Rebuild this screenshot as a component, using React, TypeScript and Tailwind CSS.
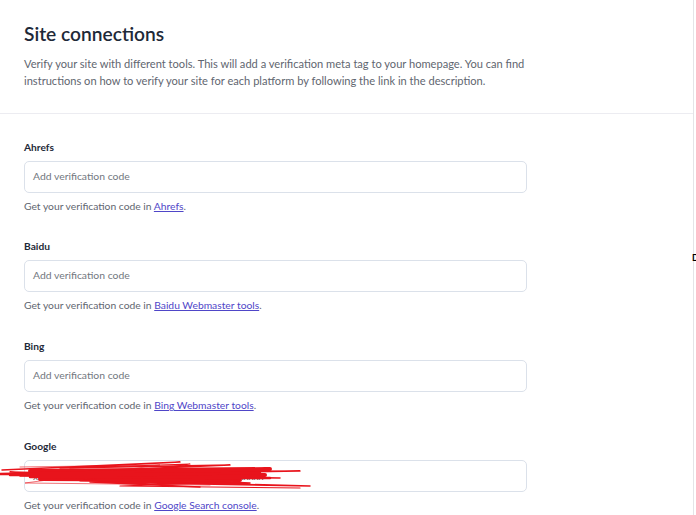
import React from "react";

const sections = [
  { name: "Ahrefs", link: "Ahrefs", value: "" },
  { name: "Baidu", link: "Baidu Webmaster tools", value: "" },
  { name: "Bing", link: "Bing Webmaster tools", value: "" },
  { name: "Google", link: "Google Search console", value: "xxxxxxxxxxxx-xxxxxxxxxxx-xxxxxxxxxxxxxxxx_xxxxx" },
];

function Scribble() {
  return (
    <svg
      className="absolute left-0 top-[456px] pointer-events-none"
      width="320"
      height="40"
      viewBox="0 0 320 40"
    >
      <g stroke="#e8141c" fill="none" strokeLinecap="round" strokeLinejoin="round">
        <path d="M2 14 L180 6 L60 12 L230 9 L40 17 L300 15 L20 20 L280 22 L10 16 L250 27 L70 24 L310 30 L90 26 L200 31" strokeWidth="1.5" />
        <path d="M30 15 L270 13 L50 19 L265 19 L40 23 L240 24 L60 17 L255 16" strokeWidth="4" />
        <path d="M70 12 L190 8 L80 25 L230 26 L120 30 L300 32" strokeWidth="1.2" />
        <path d="M0 18 L150 15 L10 19 L260 17 L30 21 L270 22" strokeWidth="2.5" />
        <path d="M20 11 L160 9 L25 27 L210 29" strokeWidth="1" strokeOpacity="0.6" />
      </g>
    </svg>
  );
}

export default function App() {
  return (
    <div
      className="relative w-[696px] h-[515px] overflow-hidden bg-white"
      style={{ fontFamily: 'Lato, "Open Sans", sans-serif' }}
    >
      <div className="w-[694px] h-full border-r border-[#e4e4e7] bg-white">
        <div className="px-6 pt-[20px] pb-[24px] border-b border-[#ececf1]">
          <h1 className="text-[19.2px] leading-[28px] font-semibold text-[#1e2938]">Site connections</h1>
          <p className="mt-[7px] text-[11.1px] leading-[17px] text-[#5f6670]">
            Verify your site with different tools. This will add a verification meta tag to your homepage. You can find
            <br />
            instructions on how to verify your site for each platform by following the link in the description.
          </p>
        </div>
        <div className="px-6 pt-[25px] flex flex-col gap-[25px]">
          {sections.map((s, i) => (
            <div key={s.name} className={i === 1 ? "w-[503px] -mt-px" : "w-[503px]"}>
              <div className="text-[10.2px] leading-4 font-bold text-[#1e2938]">{s.name}</div>
              <div className="mt-[6px] h-[32px] rounded-[5px] border border-[#dbe1ea] bg-white flex items-center px-[8px]">
                {s.value ? (
                  <span className="text-[10px] text-[#555]">{s.value}</span>
                ) : (
                  <span className="text-[10.4px] text-[#727780]">Add verification code</span>
                )}
              </div>
              <div className="mt-[5px] text-[10.3px] leading-4 text-[#5f6670]">
                Get your verification code in{" "}
                <span className="text-[#4f46c8] underline">{s.link}</span>.
              </div>
            </div>
          ))}
        </div>
      </div>
      <Scribble />
      <div className="absolute left-[692px] top-[253px] w-[4px] h-[9px] overflow-hidden">
        <span className="block text-[9px] leading-[9px] font-bold text-black">D</span>
      </div>
    </div>
  );
}
